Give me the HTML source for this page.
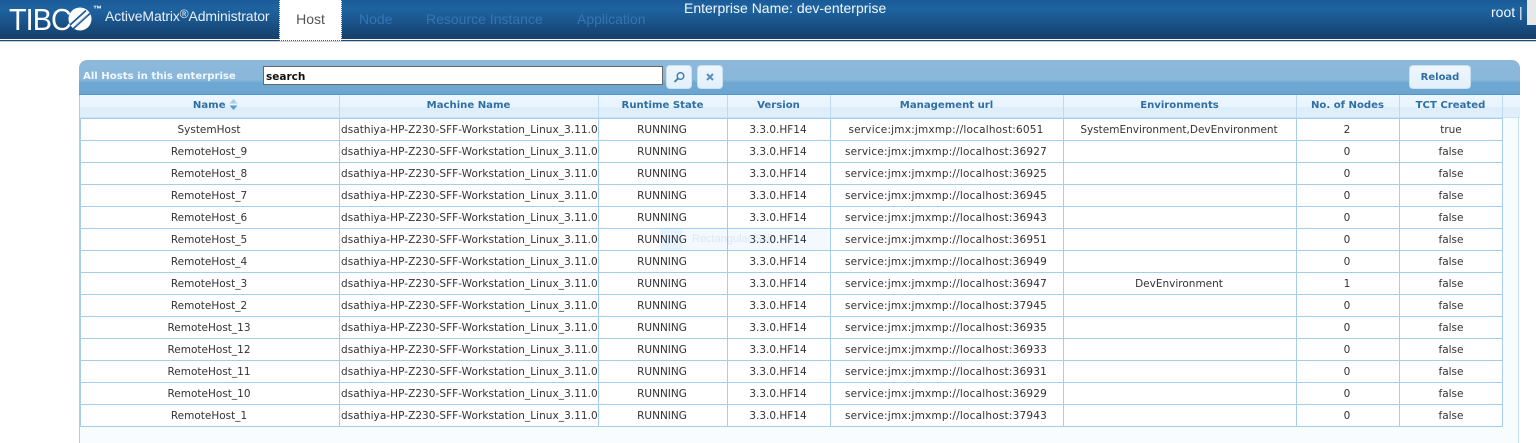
<!DOCTYPE html>
<html>
<head>
<meta charset="utf-8">
<style>
html,body{margin:0;padding:0;background:#fff;width:1536px;height:443px;overflow:hidden;font-family:"Liberation Sans",sans-serif}
.a{position:absolute;white-space:nowrap}
#nav{left:0;top:0;width:1536px;height:39px;background:linear-gradient(#1a5a97 0,#1e639f 8px,#1c5c96 16px,#17497a 30px,#163f69 39px)}
.tab{top:11px;font-size:14px;line-height:17px;color:#3375b2}
.btn{background:linear-gradient(#eef6fd,#e2f0fb);border:1px solid #cbe1f2;border-radius:4px;box-sizing:border-box}
table{position:absolute;left:80px;top:118px;border-collapse:separate;border-spacing:0;table-layout:fixed;width:1423px;font-family:"DejaVu Sans",sans-serif;font-size:10.5px;color:#333;background:#fff;border-left:1px solid #a3cde8;border-top:1px solid #a3cde8}
td{height:19px;padding:2px 2px 0 0;border-right:1px solid #a3cde8;border-bottom:1px solid #a3cde8;text-align:center;overflow:hidden;white-space:nowrap;line-height:19px}
td:nth-child(2){text-align:left;padding:2px 0 0 1px;letter-spacing:.05px}
td:nth-child(5){letter-spacing:.2px}
td:nth-child(8){padding-right:0}
.th{top:95px;height:23px;line-height:22px;text-align:center;font-family:"DejaVu Sans",sans-serif;font-weight:bold;font-size:10.1px;color:#2f6ea5;border-right:1px solid #bcdaf0;box-sizing:border-box;padding-right:1px}
</style>
</head>
<body>
<div class="a" id="nav"></div>
<div class="a" style="left:0;top:39px;width:1536px;height:1px;background:#f4f8fb"></div>
<div class="a" style="left:0;top:40px;width:1536px;height:1px;background:#1c4a75"></div>
<div class="a" style="left:0;top:41px;width:1536px;height:1px;background:#c9ced3"></div>

<div class="a" style="left:9px;top:2px;font-size:31px;line-height:36px;color:#fff;letter-spacing:-1px;transform-origin:0 0;transform:scaleX(.93)">TIBC</div>
<svg class="a" style="left:68px;top:7px" width="24" height="24" viewBox="0 0 24 24">
<circle cx="12" cy="12" r="11.5" fill="#fff"/>
<path d="M2 18L18 3.5M5.5 21.5L22 6.5" stroke="#1d5a94" stroke-width="1.8" fill="none"/>
<path d="M8 18L19 8" stroke="#8fb0cf" stroke-width="1" fill="none"/>
</svg>
<div class="a" style="left:93px;top:4px;font-size:9px;line-height:10px;font-weight:bold;color:#fff">™</div>
<div class="a" style="left:105px;top:8px;font-size:14px;line-height:17px;color:#e8f0f7;letter-spacing:-.12px">ActiveMatrix<span style="font-size:12px;position:relative;top:-3px">®</span>Administrator</div>

<div class="a" style="left:279px;top:0;width:63px;height:41px;box-sizing:border-box;background:#fff;border-left:1px dotted #555;border-right:1px dotted #555;border-bottom:1px dotted #555;text-align:center;font-size:14px;line-height:38px;color:#555">Host</div>
<div class="a tab" style="left:359px">Node</div>
<div class="a tab" style="left:426px">Resource Instance</div>
<div class="a tab" style="left:577px">Application</div>
<div class="a" style="left:684px;top:0;font-size:14px;line-height:16px;color:#f4f8fb">Enterprise Name: dev-enterprise</div>
<div class="a" style="left:1491px;top:4px;font-size:14px;line-height:17px;color:#f4f8fb">root |</div>
<div class="a" style="left:1527px;top:0;width:9px;height:25px;background:#e8e8e8"></div>

<div class="a" style="left:79px;top:60px;width:1441px;height:35px;background:linear-gradient(#8cb9db 0,#8ab8da 55%,#6fa8d2 65%,#6ba5d0 97%,#4f97d3 97%);border-radius:8px 8px 0 0"></div>
<div class="a" style="left:79px;top:95px;width:1441px;height:348px;background:#f8fcfe;box-sizing:border-box;border-left:1px solid #a3cde8;border-right:1px solid #a3cde8"></div>
<div class="a" style="left:1518px;top:118px;width:2px;height:325px;background:#fff;border-left:1px solid #c6dff0;box-sizing:border-box"></div>
<div class="a" style="left:83px;top:70px;font-family:'DejaVu Sans',sans-serif;font-weight:bold;font-size:10.15px;line-height:14px;color:#f1f7fc">All Hosts in this enterprise</div>
<div class="a" style="left:263px;top:66px;width:400px;height:19px;box-sizing:border-box;background:#fff;border:1px solid #666;font-family:'DejaVu Sans',sans-serif;font-weight:bold;font-size:10.5px;line-height:20px;padding-left:2px;color:#111">search</div>
<div class="a btn" style="left:666px;top:65px;width:26px;height:24px"></div>
<svg class="a" style="left:672px;top:71px" width="14" height="13" viewBox="0 0 14 13"><circle cx="8.5" cy="5" r="3.3" fill="none" stroke="#3a7cb0" stroke-width="1.4"/><path d="M6 7.5L2.5 11" stroke="#3a7cb0" stroke-width="1.8"/></svg>
<div class="a btn" style="left:697px;top:65px;width:26px;height:24px"></div>
<svg class="a" style="left:705px;top:72px" width="10" height="10" viewBox="0 0 10 10"><path d="M2 2L8 8M8 2L2 8" stroke="#5b8fbb" stroke-width="2"/></svg>
<div class="a btn" style="left:1409px;top:65px;width:62px;height:24px;text-align:center;font-family:'DejaVu Sans',sans-serif;font-weight:bold;font-size:10px;line-height:23px;color:#2f6ea5">Reload</div>

<div class="a" style="left:80px;top:95px;width:1440px;height:23px;background:linear-gradient(#ecf6fe 0,#e8f4fe 50%,#dcedfa 55%,#e0effb 95%,#bcd9ee 100%);box-sizing:border-box"></div>
<div class="a th" style="left:80px;width:260px;padding-left:12px;padding-right:0">Name <svg width="9" height="11" viewBox="0 0 9 11" style="vertical-align:-2px"><path d="M4.5 0L8.5 4.5H.5Z" fill="#a9cbe6"/><path d="M4.5 11L8.5 6.5H.5Z" fill="#5b9bd0"/></svg></div>
<div class="a th" style="left:340px;width:259px">Machine Name</div>
<div class="a th" style="left:599px;width:129px">Runtime State</div>
<div class="a th" style="left:728px;width:103px">Version</div>
<div class="a th" style="left:831px;width:233px">Management url</div>
<div class="a th" style="left:1064px;width:233px">Environments</div>
<div class="a th" style="left:1297px;width:103px">No. of Nodes</div>
<div class="a th" style="left:1400px;width:103px">TCT Created</div>

<table>
<colgroup><col style="width:259px"><col style="width:259px"><col style="width:129px"><col style="width:103px"><col style="width:233px"><col style="width:233px"><col style="width:103px"><col style="width:103px"></colgroup>
<tr><td>SystemHost</td><td>dsathiya-HP-Z230-SFF-Workstation_Linux_3.11.0</td><td>RUNNING</td><td>3.3.0.HF14</td><td>service:jmx:jmxmp://localhost:6051</td><td>SystemEnvironment,DevEnvironment</td><td>2</td><td>true</td></tr>
<tr><td>RemoteHost_9</td><td>dsathiya-HP-Z230-SFF-Workstation_Linux_3.11.0</td><td>RUNNING</td><td>3.3.0.HF14</td><td>service:jmx:jmxmp://localhost:36927</td><td></td><td>0</td><td>false</td></tr>
<tr><td>RemoteHost_8</td><td>dsathiya-HP-Z230-SFF-Workstation_Linux_3.11.0</td><td>RUNNING</td><td>3.3.0.HF14</td><td>service:jmx:jmxmp://localhost:36925</td><td></td><td>0</td><td>false</td></tr>
<tr><td>RemoteHost_7</td><td>dsathiya-HP-Z230-SFF-Workstation_Linux_3.11.0</td><td>RUNNING</td><td>3.3.0.HF14</td><td>service:jmx:jmxmp://localhost:36945</td><td></td><td>0</td><td>false</td></tr>
<tr><td>RemoteHost_6</td><td>dsathiya-HP-Z230-SFF-Workstation_Linux_3.11.0</td><td>RUNNING</td><td>3.3.0.HF14</td><td>service:jmx:jmxmp://localhost:36943</td><td></td><td>0</td><td>false</td></tr>
<tr><td>RemoteHost_5</td><td>dsathiya-HP-Z230-SFF-Workstation_Linux_3.11.0</td><td>RUNNING</td><td>3.3.0.HF14</td><td>service:jmx:jmxmp://localhost:36951</td><td></td><td>0</td><td>false</td></tr>
<tr><td>RemoteHost_4</td><td>dsathiya-HP-Z230-SFF-Workstation_Linux_3.11.0</td><td>RUNNING</td><td>3.3.0.HF14</td><td>service:jmx:jmxmp://localhost:36949</td><td></td><td>0</td><td>false</td></tr>
<tr><td>RemoteHost_3</td><td>dsathiya-HP-Z230-SFF-Workstation_Linux_3.11.0</td><td>RUNNING</td><td>3.3.0.HF14</td><td>service:jmx:jmxmp://localhost:36947</td><td>DevEnvironment</td><td>1</td><td>false</td></tr>
<tr><td>RemoteHost_2</td><td>dsathiya-HP-Z230-SFF-Workstation_Linux_3.11.0</td><td>RUNNING</td><td>3.3.0.HF14</td><td>service:jmx:jmxmp://localhost:37945</td><td></td><td>0</td><td>false</td></tr>
<tr><td>RemoteHost_13</td><td>dsathiya-HP-Z230-SFF-Workstation_Linux_3.11.0</td><td>RUNNING</td><td>3.3.0.HF14</td><td>service:jmx:jmxmp://localhost:36935</td><td></td><td>0</td><td>false</td></tr>
<tr><td>RemoteHost_12</td><td>dsathiya-HP-Z230-SFF-Workstation_Linux_3.11.0</td><td>RUNNING</td><td>3.3.0.HF14</td><td>service:jmx:jmxmp://localhost:36933</td><td></td><td>0</td><td>false</td></tr>
<tr><td>RemoteHost_11</td><td>dsathiya-HP-Z230-SFF-Workstation_Linux_3.11.0</td><td>RUNNING</td><td>3.3.0.HF14</td><td>service:jmx:jmxmp://localhost:36931</td><td></td><td>0</td><td>false</td></tr>
<tr><td>RemoteHost_10</td><td>dsathiya-HP-Z230-SFF-Workstation_Linux_3.11.0</td><td>RUNNING</td><td>3.3.0.HF14</td><td>service:jmx:jmxmp://localhost:36929</td><td></td><td>0</td><td>false</td></tr>
<tr><td>RemoteHost_1</td><td>dsathiya-HP-Z230-SFF-Workstation_Linux_3.11.0</td><td>RUNNING</td><td>3.3.0.HF14</td><td>service:jmx:jmxmp://localhost:37943</td><td></td><td>0</td><td>false</td></tr>
</table>

<div class="a" style="left:660px;top:229px;width:170px;height:21px;background:#f3f9fe;mix-blend-mode:multiply"></div>
<div class="a" style="left:660px;top:229px;width:22px;height:21px;background:#f2f8fd;mix-blend-mode:multiply"></div>
<div class="a" style="left:692px;top:233px;font-size:11px;line-height:13px;color:#e6eef6;mix-blend-mode:multiply">Rectangular Snip</div>
</body>
</html>
